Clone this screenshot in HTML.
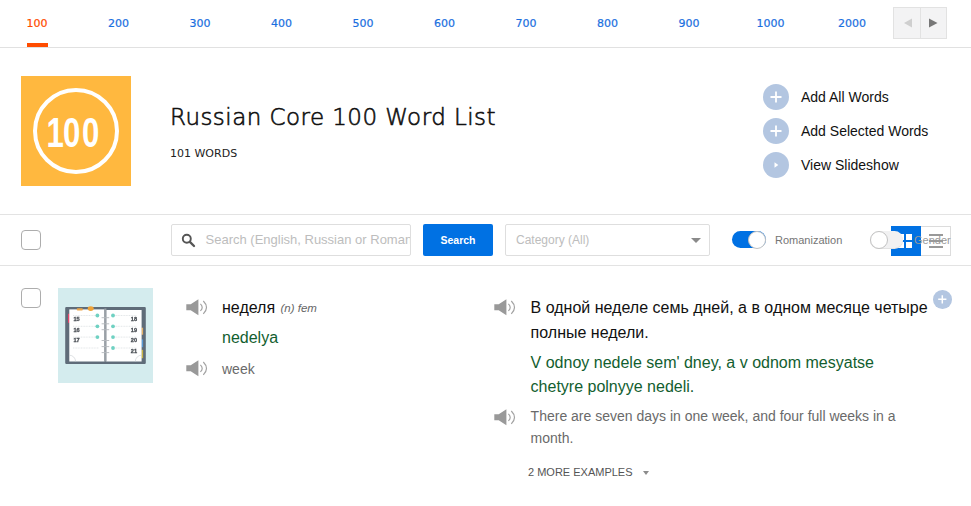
<!DOCTYPE html>
<html lang="en">
<head>
<meta charset="utf-8">
<title>Russian Core 100 Word List</title>
<style>
  html, body { margin: 0; padding: 0; background: #fff; }
  body { width: 971px; height: 506px; position: relative; overflow: hidden;
         font-family: "Liberation Sans", sans-serif; color: #111; }
  .abs { position: absolute; white-space: nowrap; }
  /* ---------- top nav ---------- */
  .nav { position: absolute; left: 0; top: 0; width: 971px; height: 47px; border-bottom: 1px solid #e1e1e1; }
  .tab { position: absolute; top: 17px; -webkit-text-stroke: 0.2px currentColor; width: 60px; margin-left: -30px; text-align: center;
         font-family: "DejaVu Sans", "Liberation Sans", sans-serif; font-size: 11px; line-height: 14px; color: #1a6fe0; }
  .tab.on { color: #ff4c00; }
  .tabbar { position: absolute; left: 27px; top: 43px; width: 21px; height: 4px; background: #ff4c00; }
  .arrows { position: absolute; left: 893px; top: 7px; width: 52px; height: 30px; background: #f3f3f4; border: 1px solid #e2e2e2; }
  .arrows i { position: absolute; left: 26px; top: 0; width: 1px; height: 30px; background: #e2e2e2; }
  /* ---------- header ---------- */
  .badge { position: absolute; left: 21px; top: 76px; width: 110px; height: 110px; background: #ffb83f; }
  .title { left: 170px; top: 100px; font-family: "DejaVu Sans", "Liberation Sans", sans-serif; font-weight: 200; font-size: 23px; line-height: 34px; color: #111; letter-spacing: 0.45px; -webkit-text-stroke: 0.6px #111; }
  .count { left: 170px; top: 147px; font-family: "DejaVu Sans", "Liberation Sans", sans-serif; font-size: 11px; line-height: 14px; color: #222; }
  .act { position: absolute; left: 763px; width: 26px; height: 26px; border-radius: 50%; background: #b3c6e1; }
  .actt { left: 801px; font-size: 14px; line-height: 18px; color: #111; }
  /* ---------- toolbar ---------- */
  .bar { position: absolute; left: 0; top: 214px; width: 971px; height: 50px; border-top: 1px solid #e3e3e3; border-bottom: 1px solid #e3e3e3; }
  .cb { position: absolute; left: 21px; width: 18px; height: 18px; border: 1px solid #adadad; border-radius: 4px; background: #fff; }
  .search { position: absolute; left: 171px; top: 224px; width: 238px; height: 30px; border: 1px solid #dedede; border-radius: 2px; background: #fff; overflow: hidden; }
  .ph { font-size: 13px; line-height: 18px; color: #bdbdbd; }
  .btn { position: absolute; left: 423px; top: 224px; width: 70px; height: 32px; background: #0071e3; color: #fff;
         font-size: 10.5px; font-weight: bold; line-height: 33px; text-align: center; border-radius: 2px; }
  .sel { position: absolute; left: 505px; top: 224px; width: 203px; height: 30px; border: 1px solid #dedede; border-radius: 2px; background: #fff; }
  .tog { position: absolute; top: 231.4px; width: 34px; height: 17px; border-radius: 9px; }
  .tog b { position: absolute; top: -0.5px; width: 16px; height: 16px; border-radius: 50%; background: #fff; border: 1px solid #c2c2c2; }
  .lbl { font-size: 11px; line-height: 14px; color: #757575; }
  /* ---------- row ---------- */
  .ru { font-size: 16px; line-height: 25px; color: #111; }
  .ro { font-size: 16px; line-height: 24px; color: #125e2f; }
  .en { font-size: 14px; line-height: 22px; color: #6a6a6a; }
</style>
</head>
<body>

<!-- top navigation -->
<div class="nav">
  <div class="tab on" style="left:37px">100</div>
  <div class="tab" style="left:118.5px">200</div>
  <div class="tab" style="left:200px">300</div>
  <div class="tab" style="left:281.5px">400</div>
  <div class="tab" style="left:363px">500</div>
  <div class="tab" style="left:444.5px">600</div>
  <div class="tab" style="left:526px">700</div>
  <div class="tab" style="left:607.5px">800</div>
  <div class="tab" style="left:689px">900</div>
  <div class="tab" style="left:770.5px">1000</div>
  <div class="tab" style="left:852px">2000</div>
  <div class="tabbar"></div>
  <div class="arrows"><i></i>
    <svg class="abs" style="left:0;top:0" width="52" height="30" viewBox="0 0 52 30">
      <path d="M18 10.5 L18 19.5 L10 15 Z" fill="#cfcfcf"/>
      <path d="M35 10.5 L35 19.5 L43.5 15 Z" fill="#777"/>
    </svg>
  </div>
</div>

<!-- header -->
<div class="badge">
  <svg width="110" height="110" viewBox="0 0 110 110">
    <circle cx="55" cy="55" r="41" fill="none" stroke="#fff" stroke-width="4"/>
    <text transform="scale(0.742,1)" x="34.5 56.67 82.28" y="70.7" font-size="42" fill="#fff" style="font-family:'Liberation Sans',sans-serif;font-weight:bold">100</text>
  </svg>
</div>
<div class="abs title">Russian Core 100 Word List</div>
<div class="abs count">101 WORDS</div>

<div class="act" style="top:84px"><svg width="26" height="26"><path d="M13 7.5v11M7.5 13h11" stroke="#fff" stroke-width="1.8" fill="none"/></svg></div>
<div class="act" style="top:118px"><svg width="26" height="26"><path d="M13 7.5v11M7.5 13h11" stroke="#fff" stroke-width="1.8" fill="none"/></svg></div>
<div class="act" style="top:152px"><svg width="26" height="26"><path d="M11.5 10.2 L11.5 15.8 L15.3 13 Z" fill="#fff"/></svg></div>
<div class="abs actt" style="top:88px">Add All Words</div>
<div class="abs actt" style="top:122px">Add Selected Words</div>
<div class="abs actt" style="top:156px">View Slideshow</div>

<!-- toolbar -->
<div class="bar"></div>
<div class="cb" style="top:230px"></div>
<div class="search">
  <svg class="abs" style="left:9px;top:7px" width="16" height="16" viewBox="0 0 16 16">
    <circle cx="5.8" cy="6.8" r="4" fill="none" stroke="#555" stroke-width="1.9"/>
    <path d="M8.9 9.9 L13 14" stroke="#555" stroke-width="2.3" stroke-linecap="round"/>
  </svg>
  <div class="abs ph" style="left:33.5px;top:6px">Search (English, Russian or Romanization)</div>
</div>
<div class="btn">Search</div>
<div class="sel">
  <div class="abs ph" style="left:10px;top:6px;font-size:12px">Category (All)</div>
  <svg class="abs" style="left:184.5px;top:12.7px" width="10" height="5"><path d="M0 0 L10 0 L5 5 Z" fill="#8a8a8a"/></svg>
</div>
<div class="tog" style="left:731.5px;background:#0071e3"><b style="left:16.5px"></b></div>
<div class="abs lbl" style="left:775px;top:233px">Romanization</div>

<!-- view switch (grid / list) -->
<div class="abs" style="left:891px;top:226px;width:30px;height:30px;background:#0071e3">
  <svg width="30" height="30"><g fill="#fff"><rect x="7" y="8" width="6" height="6"/><rect x="15" y="8" width="6" height="6"/><rect x="7" y="16" width="6" height="6"/><rect x="15" y="16" width="6" height="6"/></g></svg>
</div>
<div class="abs" style="left:921px;top:226px;width:29px;height:28px;border:1px solid #dcdcdc;border-left:none;background:#fff">
  <svg width="29" height="28"><g fill="#999"><rect x="8" y="7" width="14" height="2"/><rect x="8" y="13" width="14" height="2"/><rect x="8" y="19" width="14" height="2"/></g></svg>
</div>
<div class="tog" style="left:869.5px;width:33.5px;background:#f1f1f2;box-shadow:0 1px 0 #e2e2e2"><b style="left:0"></b></div>
<div class="abs lbl" style="left:914px;top:233px;color:#9a9a9a">Gender</div>

<!-- word row -->
<div class="cb" style="top:288px"></div>
<div class="abs" style="left:58px;top:288px;width:95px;height:95px;background:#d4ecee;overflow:hidden" id="pic">
  <svg width="95" height="95" viewBox="0 0 95 95" style="filter:blur(0.45px)">
    <rect x="7.2" y="18.9" width="80.6" height="57" rx="1.2" fill="#5f6c79"/>
    <rect x="10" y="25.8" width="1.8" height="9" fill="#e8466c"/>
    <rect x="83.4" y="39.7" width="1.7" height="7" fill="#e5b36a"/>
    <rect x="83.4" y="51.4" width="1.7" height="7.8" fill="#5a9ad6"/>
    <rect x="83.4" y="61.8" width="1.7" height="8.4" fill="#c9b545"/>
    <rect x="11.3" y="21.4" width="35.2" height="52.1" fill="#fff"/>
    <rect x="48.2" y="22" width="35.4" height="51.5" fill="#fff"/>
    <rect x="46.3" y="20.5" width="2.1" height="53" fill="#9aa0a6"/>
    <g stroke="#b4b8bc" stroke-width="0.9">
      <path d="M43.6 29.7h7.6M43.6 35.8h7.6M43.6 41.7h7.6M43.6 52.5h7.6M43.6 58.6h7.6M43.6 64.6h7.6"/>
    </g>
    <g stroke="#d9dde0" stroke-width="0.7" stroke-dasharray="1 0.6" fill="none">
      <path d="M15 27.5h24M15 38.3h24M15 49.1h24M15 60h26"/>
      <path d="M55 27.5h24M55 38.3h24M55 49.1h24M55 60h24"/>
    </g>
    <g fill="#6fd1c2">
      <circle cx="39.4" cy="27.5" r="1.9"/><circle cx="39.4" cy="38.3" r="1.9"/><circle cx="39.4" cy="49.1" r="1.9"/>
      <circle cx="55" cy="27.5" r="1.9"/><circle cx="55" cy="38.3" r="1.9"/><circle cx="55" cy="49.1" r="1.9"/><circle cx="55" cy="60" r="1.9"/>
    </g>
    <g style="font-family:'Liberation Sans',sans-serif" font-weight="bold" font-size="5.6" fill="#4a4f55" stroke="#4a4f55" stroke-width="0.3">
      <text x="15.4" y="32.8">15</text><text x="15.4" y="43.6">16</text><text x="15.4" y="54.3">17</text>
      <text x="72.8" y="32.8">18</text><text x="72.8" y="43.6">19</text><text x="72.8" y="54.3">20</text><text x="72.8" y="65.3">21</text>
    </g>
    <ellipse cx="32.7" cy="20.6" rx="3" ry="2.3" fill="#f0a338"/>
    <rect x="18.7" y="20.2" width="6.2" height="2.2" rx="1" fill="#eda64a"/>
    <path d="M11.3 67.2a6.3 6.3 0 0 1 6.3 6.3" fill="none" stroke="#c9cdd1" stroke-width="0.6"/>
    <path d="M83.6 67.2a6.3 6.3 0 0 0 -6.3 6.3" fill="none" stroke="#c9cdd1" stroke-width="0.6"/>
  </svg>
</div>

<svg class="abs spk" style="left:186px;top:299px" width="22" height="17" viewBox="0 0 22 17"><path d="M0.3 5.3H4.7L12.4 0.2V16.2L4.7 11.2H0.3z" fill="#999"/><path d="M14.4 4.9Q18 8.4 14.4 11.9M17.3 2Q23.7 8.4 17.3 14.8" fill="none" stroke="#a2a2a2" stroke-width="1.2"/></svg>
<svg class="abs spk" style="left:186px;top:360px" width="22" height="17" viewBox="0 0 22 17"><path d="M0.3 5.3H4.7L12.4 0.2V16.2L4.7 11.2H0.3z" fill="#999"/><path d="M14.4 4.9Q18 8.4 14.4 11.9M17.3 2Q23.7 8.4 17.3 14.8" fill="none" stroke="#a2a2a2" stroke-width="1.2"/></svg>
<svg class="abs spk" style="left:494px;top:299px" width="22" height="17" viewBox="0 0 22 17"><path d="M0.3 5.3H4.7L12.4 0.2V16.2L4.7 11.2H0.3z" fill="#999"/><path d="M14.4 4.9Q18 8.4 14.4 11.9M17.3 2Q23.7 8.4 17.3 14.8" fill="none" stroke="#a2a2a2" stroke-width="1.2"/></svg>
<svg class="abs spk" style="left:494px;top:409px" width="22" height="17" viewBox="0 0 22 17"><path d="M0.3 5.3H4.7L12.4 0.2V16.2L4.7 11.2H0.3z" fill="#999"/><path d="M14.4 4.9Q18 8.4 14.4 11.9M17.3 2Q23.7 8.4 17.3 14.8" fill="none" stroke="#a2a2a2" stroke-width="1.2"/></svg>

<div class="abs ru" style="left:222px;top:295px">неделя <span style="font-size:11.5px;font-style:italic;color:#666;position:relative;top:-1px;left:1px">(n) fem</span></div>
<div class="abs ro" style="left:222px;top:325px;line-height:25px">nedelya</div>
<div class="abs en" style="left:222px;top:358px">week</div>

<div class="abs ru" style="left:530.6px;top:295px">В одной неделе семь дней, а в одном месяце четыре<br>полные недели.</div>
<div class="abs ro" style="left:530.6px;top:351px">V odnoy nedele sem' dney, a v odnom mesyatse<br>chetyre polnyye nedeli.</div>
<div class="abs en" style="left:530.6px;top:405px">There are seven days in one week, and four full weeks in a<br>month.</div>
<div class="abs" style="left:528px;top:465px;font-size:11px;line-height:14px;color:#555">2 MORE EXAMPLES</div>
<svg class="abs" style="left:643.2px;top:471px" width="6" height="4"><path d="M0 0h6l-3 4z" fill="#8c8c8c"/></svg>

<div class="abs" style="left:933px;top:290px;width:18.6px;height:18.6px;border-radius:50%;background:#b3c6e1">
  <svg width="19" height="19"><path d="M9.3 5.2v8.2M5.2 9.3h8.2" stroke="#fff" stroke-width="1.5" fill="none"/></svg>
</div>

</body>
</html>
